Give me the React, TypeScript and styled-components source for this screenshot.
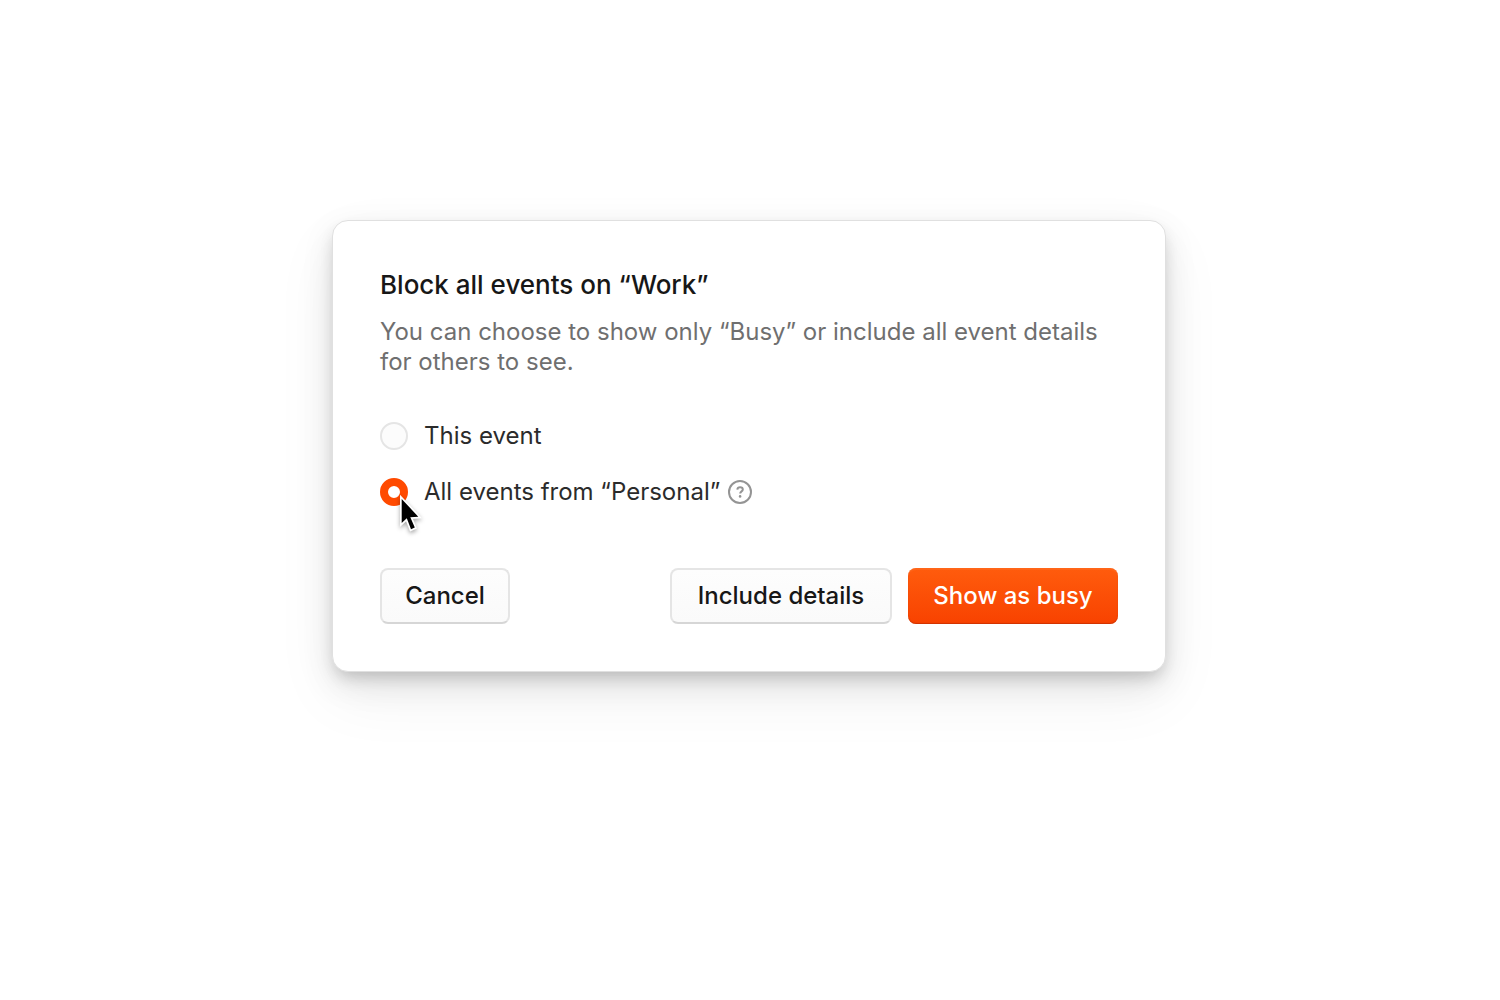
import React, { useState } from "react";
import styled, { createGlobalStyle, css } from "styled-components";

const GlobalStyle = createGlobalStyle`
  *, *::before, *::after { box-sizing: border-box; }
  body {
    margin: 0;
    background: #fff;
    font-family: Inter, "Liberation Sans", sans-serif;
  }
`;

const Page = styled.main`
  min-height: 100vh;
  display: flex;
  align-items: center;
  justify-content: center;
  padding: 24px 26px 132px 24px;
`;

const Dialog = styled.section`
  width: 100%;
  max-width: 834px;
  padding: 47px;
  border: 1px solid #e0e0e0;
  border-radius: 16px;
  background: #fff;
  box-shadow:
    0 8px 16px -4px rgba(0, 0, 0, 0.18),
    0 12px 32px rgba(0, 0, 0, 0.1),
    0 24px 64px rgba(0, 0, 0, 0.06);
`;

const Title = styled.h1`
  margin: 0;
  font-size: 26px;
  line-height: 34px;
  font-weight: 500;
  color: #171717;
`;

const Description = styled.p`
  margin: 15px 0 0;
  font-size: 24px;
  line-height: 30px;
  color: #6f6f6f;
`;

const Options = styled.fieldset`
  display: flex;
  flex-direction: column;
  gap: 24px;
  margin: 43px 0 0;
  padding: 0;
  border: 0;
`;

const Option = styled.div`
  display: flex;
  align-items: center;
  height: 32px;
`;

const RadioSlot = styled.span`
  position: relative;
  display: flex;
  margin-right: 16px;
`;

const Radio = styled.input`
  appearance: none;
  width: 28px;
  height: 28px;
  margin: 0;
  border: 2px solid #e5e5e5;
  border-radius: 50%;
  background: #fcfcfc;

  &:checked {
    border: 8px solid #ff4a00;
    background: #fff;
  }
`;

const Label = styled.label`
  font-size: 24px;
  line-height: 32px;
  color: #2b2b2b;
`;

const HelpButton = styled.button`
  display: flex;
  margin: 0 0 0 8px;
  padding: 0;
  border: 0;
  background: none;
  color: #949494;
`;

const Actions = styled.div`
  display: flex;
  flex-wrap: wrap;
  gap: 16px;
  margin-top: 60px;
`;

const Button = styled.button<{ $minWidth: number; $primary?: boolean; $pushRight?: boolean }>`
  height: 56px;
  min-width: ${({ $minWidth }) => $minWidth}px;
  padding: 0 16px;
  border-radius: 8px;
  font: 500 24px/32px Inter, "Liberation Sans", sans-serif;
  ${({ $pushRight }) => $pushRight && css`margin-left: auto;`}
  ${({ $primary }) =>
    $primary
      ? css`
          border: 0;
          color: #fff;
          background: linear-gradient(#ff5c0d, #f84200);
          box-shadow: inset 0 2px 1px rgba(255, 120, 50, 0.35), inset 0 -1px 1px rgba(180, 40, 0, 0.6);
        `
      : css`
          border: 2px solid #e5e5e5;
          border-bottom-color: #d6d6d6;
          color: #171717;
          background: linear-gradient(#fdfdfd, #fafafa);
        `}
`;

const Cursor = styled.svg`
  position: absolute;
  left: 16px;
  top: 14px;
  overflow: visible;
  pointer-events: none;
  filter: drop-shadow(0 2px 2px rgba(0, 0, 0, 0.35));
`;

function HelpIcon() {
  return (
    <svg width="24" height="24" viewBox="0 0 24 24" fill="none" stroke="currentColor" strokeWidth="2" aria-hidden="true">
      <circle cx="12" cy="12" r="11" />
      <path d="M9.3 9.6c.2-1.5 1.3-2.3 2.8-2.3 1.6 0 2.7.9 2.7 2.2 0 1.9-2.6 1.9-2.6 4" />
      <circle cx="12.1" cy="16.4" r="1.3" fill="currentColor" stroke="none" />
    </svg>
  );
}

function Pointer() {
  return (
    <Cursor width="24" height="40" viewBox="0 0 24 40" aria-hidden="true">
      <path
        d="M5.7 7 L5.7 31 L10.8 26.3 L15 37.2 L18.8 35.6 L14.3 25.2 L22.3 24.7 Z"
        fill="#000"
        stroke="#fff"
        strokeWidth="3.4"
        strokeLinejoin="miter"
        paintOrder="stroke"
      />
    </Cursor>
  );
}

export default function App() {
  const [scope, setScope] = useState("all");

  return (
    <>
      <GlobalStyle />
      <Page>
        <Dialog role="dialog" aria-labelledby="dialog-title" aria-describedby="dialog-text">
          <Title id="dialog-title">Block all events on “Work”</Title>
          <Description id="dialog-text">
            You can choose to show only “Busy” or include all event details for others to see.
          </Description>
          <Options>
            <Option>
              <RadioSlot>
                <Radio
                  type="radio"
                  name="scope"
                  id="scope-this"
                  checked={scope === "this"}
                  onChange={() => setScope("this")}
                />
              </RadioSlot>
              <Label htmlFor="scope-this">This event</Label>
            </Option>
            <Option>
              <RadioSlot>
                <Radio
                  type="radio"
                  name="scope"
                  id="scope-all"
                  checked={scope === "all"}
                  onChange={() => setScope("all")}
                />
                <Pointer />
              </RadioSlot>
              <Label htmlFor="scope-all">All events from “Personal”</Label>
              <HelpButton type="button" aria-label="Help">
                <HelpIcon />
              </HelpButton>
            </Option>
          </Options>
          <Actions>
            <Button type="button" $minWidth={130}>
              Cancel
            </Button>
            <Button type="button" $minWidth={222} $pushRight>
              Include details
            </Button>
            <Button type="button" $minWidth={210} $primary>
              Show as busy
            </Button>
          </Actions>
        </Dialog>
      </Page>
    </>
  );
}
